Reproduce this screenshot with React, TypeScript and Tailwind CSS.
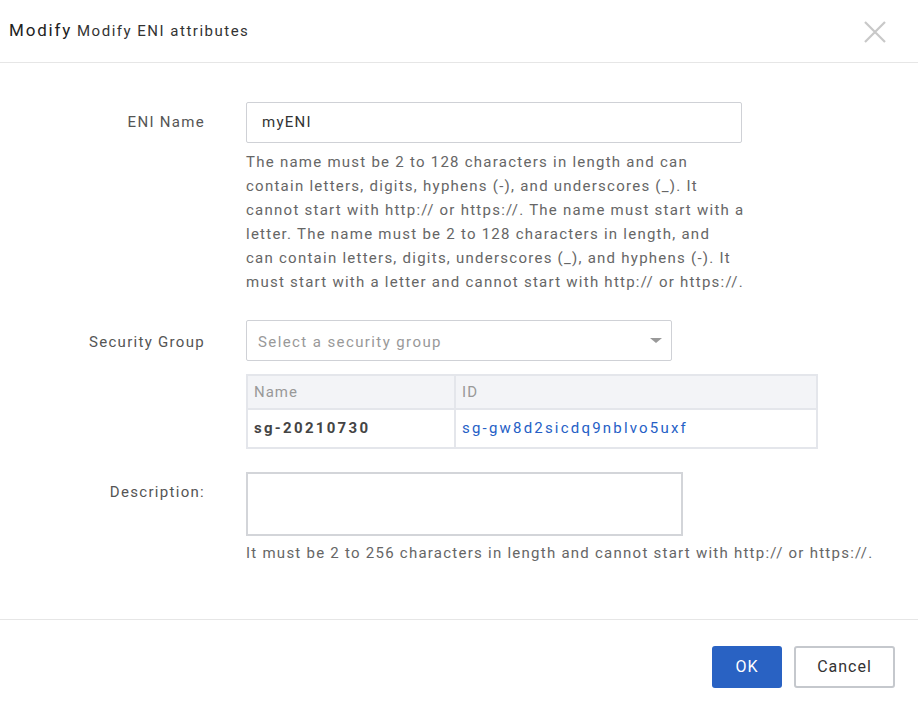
import React from "react";

const font = { fontFamily: "Roboto, 'Liberation Sans', sans-serif" };

const nameHelp = [
  "The name must be 2 to 128 characters in length and can",
  "contain letters, digits, hyphens (-), and underscores (_). It",
  "cannot start with http:// or https://. The name must start with a",
  "letter. The name must be 2 to 128 characters in length, and",
  "can contain letters, digits, underscores (_), and hyphens (-). It",
  "must start with a letter and cannot start with http:// or https://.",
];

const groups = [{ name: "sg-20210730", id: "sg-gw8d2sicdq9nblvo5uxf" }];

const Label = ({ children, className = "" }: { children: React.ReactNode; className?: string }) => (
  <div className={`w-[205px] shrink-0 text-right text-[15px] text-[#555] tracking-[1.3px] ${className}`}>{children}</div>
);

const App = () => {
  return (
    <div className="w-[918px] h-[710px] bg-white flex flex-col text-[#333] tracking-[1.25px]" style={font}>
      {/* header */}
      <div className="h-[63px] shrink-0 border-b border-[#e6e6e6] flex items-center justify-between pl-[9px] pr-[32px]">
        <div className="flex items-baseline gap-[5px]">
          <span className="text-[17px] text-[#222] tracking-[1.8px]">Modify</span>
          <span className="text-[15px] text-[#333] tracking-[1.5px]">Modify ENI attributes</span>
        </div>
        <svg width="22" height="22" viewBox="0 0 22 22" className="mt-[2px]">
          <path d="M1 1L21 21M21 1L1 21" stroke="#c8c8c8" strokeWidth="2.2" />
        </svg>
      </div>

      {/* body */}
      <div className="flex-1 pt-[39px] flex flex-col">
        <div className="flex gap-[41px]">
          <Label className="leading-[41px]">ENI Name</Label>
          <div className="w-[496px]">
            <div className="h-[41px] border border-[#cfd1d6] rounded-[2px] flex items-center px-[15px] text-[15px] text-[#333]">
              myENI
            </div>
            <p className="mt-[7px] text-[15px] leading-[24px] text-[#666] whitespace-nowrap">
              {nameHelp.map((line, i) => (
                <span key={i} className="block">
                  {line}
                </span>
              ))}
            </p>
          </div>
        </div>

        <div className="flex gap-[41px] mt-[26px]">
          <Label className="leading-[41px] pt-[2px]">Security Group</Label>
          <div className="flex flex-col">
            <div className="w-[426px] h-[41px] border border-[#cfd1d6] rounded-[2px] flex items-center justify-between pl-[11px] pr-[9px] pt-[3px] text-[15px] text-[#999] tracking-[1.4px]">
              <span>Select a security group</span>
              <svg width="12" height="6" viewBox="0 0 12 6" className="-mt-[3px]">
                <path d="M0 0H12L6 5Z" fill="#999" />
              </svg>
            </div>
            <table className="mt-[13px] w-[572px] border-collapse border-2 border-[#e4e6eb] text-[15px]">
              <thead>
                <tr className="bg-[#f3f4f7] h-[34px]">
                  <th className="w-[208px] border-r-2 border-[#e4e6eb] text-left font-normal text-[#999] px-[6px] tracking-[1px]">Name</th>
                  <th className="text-left font-normal text-[#999] px-[6px]">ID</th>
                </tr>
              </thead>
              <tbody>
                {groups.map((g) => (
                  <tr key={g.id} className="h-[39px] border-t-2 border-[#e4e6eb]">
                    <td className="border-r-2 border-[#e4e6eb] px-[6px] font-bold text-[#444] tracking-[2.3px]">{g.name}</td>
                    <td className="px-[6px] text-[#2560c6] tracking-[2.2px]">{g.id}</td>
                  </tr>
                ))}
              </tbody>
            </table>
          </div>
        </div>

        <div className="flex gap-[41px] mt-[23px]">
          <Label className="pt-[9px]">Description:</Label>
          <div>
            <div className="w-[437px] h-[64px] border-2 border-[#d3d5d9]" />
            <p className="mt-[5px] text-[15px] leading-[24px] text-[#666] whitespace-nowrap">
              It must be 2 to 256 characters in length and cannot start with http:// or https://.
            </p>
          </div>
        </div>
      </div>

      {/* footer */}
      <div className="h-[91px] shrink-0 border-t border-[#e6e6e6] flex justify-end items-start gap-[12px] pt-[26px] pr-[23px]">
        <button className="w-[70px] h-[42px] rounded-[3px] bg-[#2962c3] text-white text-[16px] tracking-[1px]">OK</button>
        <button className="w-[101px] h-[42px] rounded-[3px] border-2 border-[#c5c8cd] bg-white text-[#333] text-[16px] tracking-[1px]">
          Cancel
        </button>
      </div>
    </div>
  );
};

export default App;
